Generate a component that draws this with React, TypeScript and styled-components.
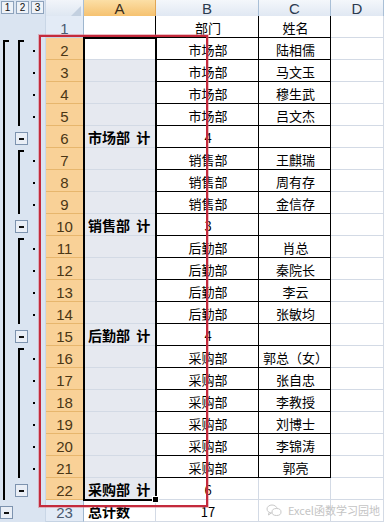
import React from "react";
import styled, { createGlobalStyle, css } from "styled-components";

type SlotKind = "top" | "line" | "btn" | "dot" | null;

interface SheetRow {
  n: number;
  a?: string;
  b?: string;
  c?: string;
  bold?: boolean;
  slots: [SlotKind, SlotKind, SlotKind];
}

const COLS = "46px 38px 72px 103px 72px 1fr";
const HEAD_H = 16;
const ROW_H = 22;
const rowTop = (n: number) => HEAD_H + (n - 1) * ROW_H;

const GlobalStyle = createGlobalStyle`
   html, body {
      margin: 0;
      padding: 0;
      background: #fff;
   }
   body {
      width: 384px;
      height: 523px;
      overflow: hidden;
      font-family: "Noto Sans CJK SC", "Liberation Sans", sans-serif;
   }
`;

const Sheet = styled.div`
   position: relative;
   width: 384px;
   height: 523px;
   overflow: hidden;
   background: #fff;
`;

const HeaderRow = styled.div`
   display: grid;
   grid-template-columns: ${COLS};
   height: ${HEAD_H}px;
`;

const Row = styled.div`
   display: grid;
   grid-template-columns: ${COLS};
   height: ${ROW_H}px;
`;

const Gutter = styled.div`
   display: flex;
   background: #dae4f1;
   border-right: 1px solid #c9d6e6;
   box-sizing: border-box;
`;

const LevelBox = styled.div`
   display: flex;
   gap: 2px;
   padding: 1px 0 0 1px;
   background: #dae4f1;
   border-right: 1px solid #c9d6e6;
   box-sizing: border-box;
`;

const LevelBtn = styled.div`
   width: 13px;
   height: 13px;
   box-sizing: border-box;
   border: 1px solid #8ea3bd;
   background: #eef2f8;
   font: 10px/11px "Liberation Sans", sans-serif;
   color: #111;
   text-align: center;
`;

const Corner = styled.div`
   background: linear-gradient(#f2f5fa, #dde6f1);
   border-right: 1px solid #a9bfd6;
   border-bottom: 1px solid #9eb6ce;
   box-sizing: border-box;
   display: flex;
   justify-content: flex-end;
   align-items: flex-end;
   padding: 0 2px 1px 0;
`;

const ColHead = styled.div<{ $sel?: boolean }>`
   display: flex;
   align-items: center;
   justify-content: center;
   box-sizing: border-box;
   font: 15px "Liberation Sans", sans-serif;
   color: #2b3a4e;
   border-right: 1px solid #a9bfd6;
   border-bottom: 1px solid #9eb6ce;
   background: linear-gradient(#f4f7fb, #dfe7f2);
   ${(p) =>
      p.$sel &&
      css`
         background: linear-gradient(#fcdfa6, #f5c06d);
         border-right-color: #e0a656;
         border-bottom-color: #d9a04e;
         color: #3a2e1c;
      `}
`;

const Slot = styled.div`
   width: 15px;
   height: 100%;
   display: flex;
   flex-direction: column;
`;

const Bracket = styled.div<{ $top?: boolean }>`
   width: 6px;
   margin-left: 3px;
   box-sizing: border-box;
   border-left: 2px solid #000;
   height: 100%;
   ${(p) =>
      p.$top &&
      css`
         margin-top: 2px;
         height: calc(100% - 2px);
         border-top: 2px solid #000;
      `}
`;

const Dot = styled.div`
   width: 2px;
   height: 2px;
   margin: 12px 0 0 3px;
   background: #000;
`;

const Collapse = styled.div`
   width: 13px;
   height: 13px;
   margin-top: 6px;
   box-sizing: border-box;
   border: 1px solid #7d93af;
   background: #e9eef6;
   display: flex;
   align-items: center;
   justify-content: center;
   &::before {
      content: "";
      width: 5px;
      height: 2px;
      background: #111;
   }
`;

const RowHead = styled.div<{ $sel?: boolean }>`
   display: flex;
   align-items: center;
   justify-content: center;
   padding-top: 3px;
   box-sizing: border-box;
   font: 15px "Liberation Sans", sans-serif;
   color: #4a5a70;
   background: #e3ebf6;
   border-right: 1px solid #9eb6ce;
   border-bottom: 1px solid #c5d3e3;
   ${(p) =>
      p.$sel &&
      css`
         background: #f9d197;
         color: #4a3615;
         border-right-color: #d9a24e;
         border-bottom-color: #e7b66d;
      `}
`;

const Cell = styled.div<{ $shade?: boolean; $box?: boolean; $edge?: boolean; $bold?: boolean; $left?: boolean }>`
   display: flex;
   align-items: center;
   justify-content: ${(p) => (p.$left ? "flex-start" : "center")};
   padding: 1px 2px 0 4px;
   box-sizing: border-box;
   overflow: hidden;
   white-space: nowrap;
   font-size: 13px;
   color: #000;
   background: ${(p) => (p.$shade ? "#e6e9f0" : "#fff")};
   border-right: 1px solid ${(p) => (p.$box || p.$edge ? "#000" : "#d3dae5")};
   border-bottom: 1px solid ${(p) => (p.$box ? "#000" : "#d3dae5")};
   ${(p) =>
      p.$bold &&
      css`
         font-size: 14px;
         font-weight: 700;
         word-spacing: 3px;
      `}
`;

const Selection = styled.div`
   position: absolute;
   left: 83px;
   top: ${rowTop(2) - 1}px;
   width: 74px;
   height: ${21 * ROW_H + 2}px;
   box-sizing: border-box;
   border: 2px solid #000;
   pointer-events: none;
   &::after {
      content: "";
      position: absolute;
      right: -4px;
      bottom: -4px;
      width: 5px;
      height: 5px;
      background: #000;
      border: 1px solid #fff;
   }
`;

const RedMark = styled.div`
   position: absolute;
   left: 39px;
   top: 35px;
   width: 169px;
   height: 472px;
   box-sizing: border-box;
   border: 2px solid #c42a3c;
   box-shadow: 0 0 0 1px rgba(214, 110, 124, 0.45);
   pointer-events: none;
`;

const Watermark = styled.div`
   position: absolute;
   left: 266px;
   top: 502px;
   display: flex;
   align-items: center;
   gap: 6px;
   font-size: 11px;
   color: #c4c4c4;
   pointer-events: none;
`;

const rows: SheetRow[] = [
   { n: 1, b: "部门", c: "姓名", slots: [null, null, null] },
   { n: 2, b: "市场部", c: "陆相儒", slots: ["top", "top", "dot"] },
   { n: 3, b: "市场部", c: "马文玉", slots: ["line", "line", "dot"] },
   { n: 4, b: "市场部", c: "穆生武", slots: ["line", "line", "dot"] },
   { n: 5, b: "市场部", c: "吕文杰", slots: ["line", "line", "dot"] },
   { n: 6, a: "市场部 计", b: "4", bold: true, slots: ["line", "btn", null] },
   { n: 7, b: "销售部", c: "王麒瑞", slots: ["line", "top", "dot"] },
   { n: 8, b: "销售部", c: "周有存", slots: ["line", "line", "dot"] },
   { n: 9, b: "销售部", c: "金信存", slots: ["line", "line", "dot"] },
   { n: 10, a: "销售部 计", b: "3", bold: true, slots: ["line", "btn", null] },
   { n: 11, b: "后勤部", c: "肖总", slots: ["line", "top", "dot"] },
   { n: 12, b: "后勤部", c: "秦院长", slots: ["line", "line", "dot"] },
   { n: 13, b: "后勤部", c: "李云", slots: ["line", "line", "dot"] },
   { n: 14, b: "后勤部", c: "张敏均", slots: ["line", "line", "dot"] },
   { n: 15, a: "后勤部 计", b: "4", bold: true, slots: ["line", "btn", null] },
   { n: 16, b: "采购部", c: "郭总（女）", slots: ["line", "top", "dot"] },
   { n: 17, b: "采购部", c: "张自忠", slots: ["line", "line", "dot"] },
   { n: 18, b: "采购部", c: "李教授", slots: ["line", "line", "dot"] },
   { n: 19, b: "采购部", c: "刘博士", slots: ["line", "line", "dot"] },
   { n: 20, b: "采购部", c: "李锦涛", slots: ["line", "line", "dot"] },
   { n: 21, b: "采购部", c: "郭亮", slots: ["line", "line", "dot"] },
   { n: 22, a: "采购部 计", b: "6", bold: true, slots: ["line", "btn", null] },
   { n: 23, a: "总计数", b: "17", bold: true, slots: ["btn", null, null] },
];

const OutlineSlot = ({ kind }: { kind: SlotKind }) => (
   <Slot>
      {kind === "top" && <Bracket $top />}
      {kind === "line" && <Bracket />}
      {kind === "dot" && <Dot />}
      {kind === "btn" && <Collapse />}
   </Slot>
);

const WeChat = () => (
   <svg width="16" height="13" viewBox="0 0 16 13" fill="none" stroke="#c8c8c8" strokeWidth="1">
      <ellipse cx="6" cy="5" rx="5" ry="4" />
      <ellipse cx="10.5" cy="8" rx="4.5" ry="3.5" fill="#fff" />
      <path d="M3 8.5 L2.5 11 L5 9.2" />
   </svg>
);

const App = () => {
   return (
      <Sheet>
         <GlobalStyle />
         <HeaderRow>
            <LevelBox>
               <LevelBtn>1</LevelBtn>
               <LevelBtn>2</LevelBtn>
               <LevelBtn>3</LevelBtn>
            </LevelBox>
            <Corner>
               <svg width="10" height="10" viewBox="0 0 10 10">
                  <polygon points="10,0 10,10 0,10" fill="#c3d0e0" />
               </svg>
            </Corner>
            <ColHead $sel>A</ColHead>
            <ColHead>B</ColHead>
            <ColHead>C</ColHead>
            <ColHead>D</ColHead>
         </HeaderRow>
         {rows.map((r) => {
            const inSel = r.n >= 2 && r.n <= 22;
            const boxed = r.n <= 21;
            return (
               <Row key={r.n}>
                  <Gutter>
                     {r.slots.map((k, i) => (
                        <OutlineSlot key={i} kind={k} />
                     ))}
                  </Gutter>
                  <RowHead $sel={inSel}>{r.n}</RowHead>
                  <Cell $left $shade={inSel && r.n !== 2} $edge={boxed} $bold={r.bold}>
                     {r.a}
                  </Cell>
                  <Cell $box={boxed}>{r.b}</Cell>
                  <Cell $box={boxed}>{r.c}</Cell>
                  <Cell />
               </Row>
            );
         })}
         <Selection />
         <RedMark />
         <Watermark>
            <WeChat />
            <span>Excel函数学习园地</span>
         </Watermark>
      </Sheet>
   );
};

export default App;
